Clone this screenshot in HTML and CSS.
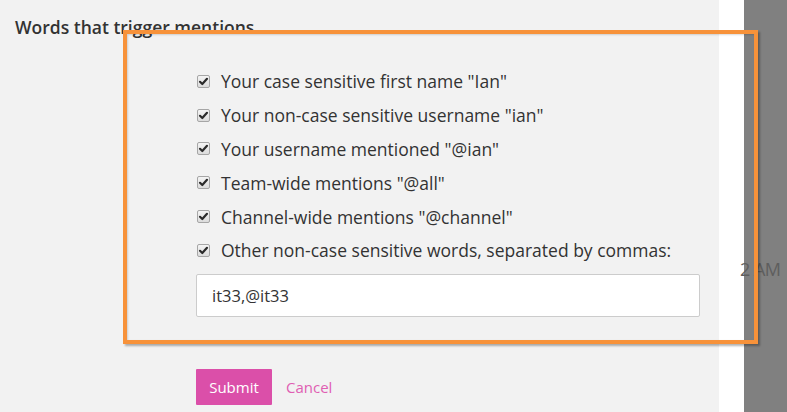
FILE: index.html
```html
<!DOCTYPE html>
<html>
<head>
<meta charset="utf-8">
<link rel="stylesheet" href="styles.css">
</head>
<body>
<div class="screen">
  <section class="panel">
    <h3 class="title">Words that trigger mentions</h3>
    <ul class="options">
      <li class="option"><span class="check"><svg viewBox="0 0 13 13" width="13" height="13"><path d="M3 6.8 L5.3 9 L10 3.8" fill="none" stroke="#2b2b2b" stroke-width="2.2" stroke-linecap="round" stroke-linejoin="round"/></svg></span>Your case sensitive first name "Ian"</li>
      <li class="option"><span class="check"><svg viewBox="0 0 13 13" width="13" height="13"><path d="M3 6.8 L5.3 9 L10 3.8" fill="none" stroke="#2b2b2b" stroke-width="2.2" stroke-linecap="round" stroke-linejoin="round"/></svg></span>Your non-case sensitive username "ian"</li>
      <li class="option"><span class="check"><svg viewBox="0 0 13 13" width="13" height="13"><path d="M3 6.8 L5.3 9 L10 3.8" fill="none" stroke="#2b2b2b" stroke-width="2.2" stroke-linecap="round" stroke-linejoin="round"/></svg></span>Your username mentioned "@ian"</li>
      <li class="option"><span class="check"><svg viewBox="0 0 13 13" width="13" height="13"><path d="M3 6.8 L5.3 9 L10 3.8" fill="none" stroke="#2b2b2b" stroke-width="2.2" stroke-linecap="round" stroke-linejoin="round"/></svg></span>Team-wide mentions "@all"</li>
      <li class="option"><span class="check"><svg viewBox="0 0 13 13" width="13" height="13"><path d="M3 6.8 L5.3 9 L10 3.8" fill="none" stroke="#2b2b2b" stroke-width="2.2" stroke-linecap="round" stroke-linejoin="round"/></svg></span>Channel-wide mentions "@channel"</li>
      <li class="option"><span class="check"><svg viewBox="0 0 13 13" width="13" height="13"><path d="M3 6.8 L5.3 9 L10 3.8" fill="none" stroke="#2b2b2b" stroke-width="2.2" stroke-linecap="round" stroke-linejoin="round"/></svg></span>Other non-case sensitive words, separated by commas:</li>
    </ul>
    <div class="field">it33,@it33</div>
    <div class="actions">
      <span class="btn">Submit</span>
      <span class="cancel">Cancel</span>
    </div>
  </section>
  <div class="strip"></div>
  <aside class="backdrop"><span class="time">2 AM</span></aside>
  <div class="highlight"></div>
</div>
</body>
</html>
```
FILE: styles.css
```css
* { box-sizing: border-box; }
html, body { margin: 0; padding: 0; }
body {
  font-family: "Open Sans", "Noto Sans", sans-serif;
  color: #333;
  width: 787px;
  height: 412px;
  overflow: hidden;
}
.screen {
  position: relative;
  display: flex;
  height: 412px;
}
.panel {
  width: 719px;
  flex: none;
  background: #f2f2f2;
  padding-top: 14px;
}
.title {
  margin: 0;
  padding-left: 15px;
  font-size: 17.5px;
  font-weight: 600;
  line-height: 26px;
  color: #333;
}
.options {
  list-style: none;
  margin: 24.5px 0 0;
  padding: 0 0 0 197px;
}
.option {
  display: flex;
  align-items: center;
  height: 33.8px;
  font-size: 17.5px;
  color: #333;
}
.check {
  display: inline-flex;
  width: 13px;
  height: 13px;
  margin-right: 11px;
  border: 1px solid #a6a6a6;
  border-radius: 2px;
  background: linear-gradient(#f4f4f4, #dcdcdc);
  align-items: center;
  justify-content: center;
}
.check svg { display: block; margin: -1px; }
.field {
  margin: 6.5px 0 0 196px;
  width: 504px;
  height: 43px;
  background: #fff;
  border: 1px solid #ccc;
  border-radius: 2px;
  padding: 0 15px;
  display: flex;
  align-items: center;
  font-size: 16.5px;
  color: #333;
}
.actions {
  margin: 52px 0 0 196px;
  display: flex;
  align-items: center;
  gap: 14px;
}
.btn {
  display: inline-flex;
  align-items: center;
  justify-content: center;
  width: 76px;
  height: 36px;
  background: #db4fa9;
  color: #fff;
  font-size: 15px;
  border-radius: 1px;
}
.cancel {
  color: #e05fb2;
  font-size: 15px;
}
.strip {
  width: 25px;
  flex: none;
  background: #fff;
}
.backdrop {
  flex: 1;
  background: #808080;
  position: relative;
  overflow: visible;
}
.time {
  position: absolute;
  left: -4px;
  top: 257px;
  font-size: 18px;
  color: #5e5e5e;
  letter-spacing: -0.5px;
}
.highlight {
  position: absolute;
  left: 123px;
  top: 30px;
  width: 635px;
  height: 314px;
  border: 4px solid #f7923a;
  box-shadow: 2px 2px 2px rgba(0,0,0,0.3), inset 1px 1px 2px rgba(0,0,0,0.15);
  pointer-events: none;
}
```
